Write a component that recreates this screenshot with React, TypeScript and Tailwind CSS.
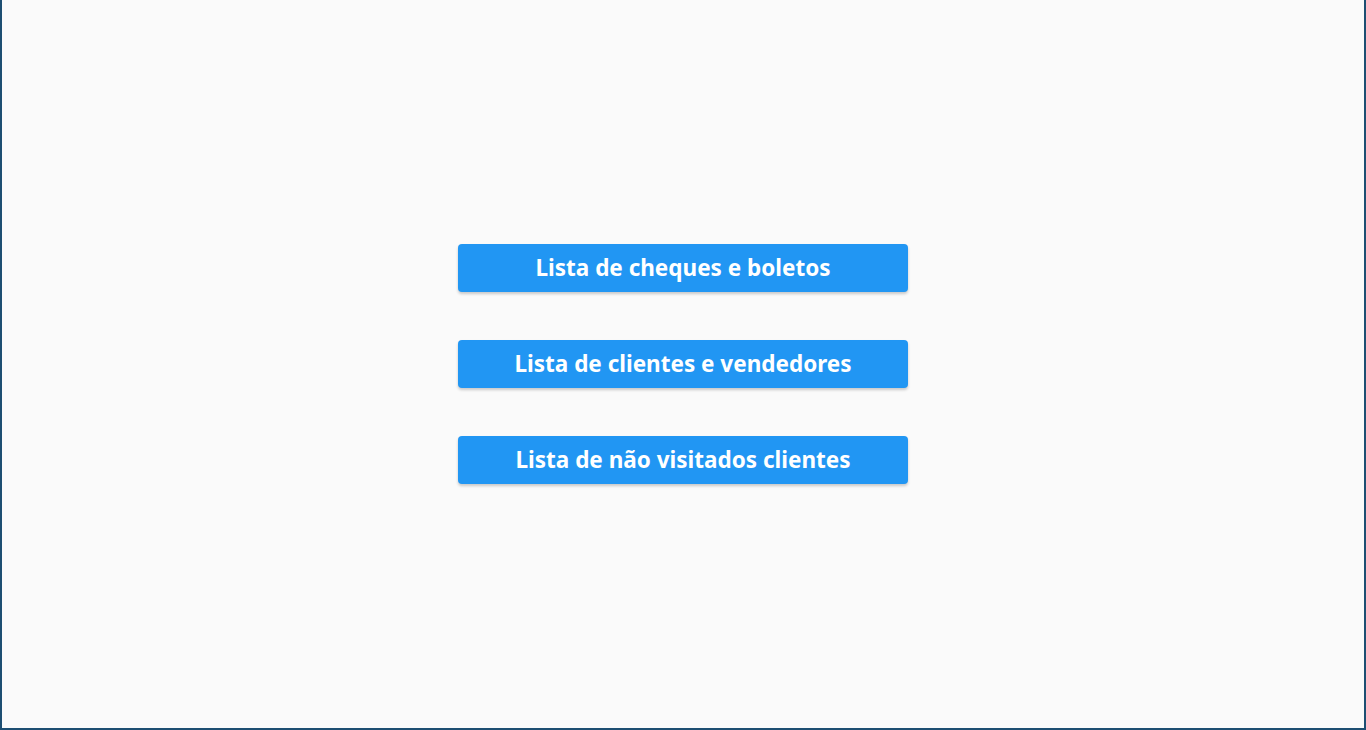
export default function App() {
  const items = [
    "Lista de cheques e boletos",
    "Lista de clientes e vendedores",
    "Lista de não visitados clientes",
  ];
  return (
    <div className="h-[730px] w-full bg-[#fafafa] border-x-2 border-b-2 border-[#1d4e72] flex flex-col items-center justify-center gap-12">
      {items.map((t) => (
        <button
          key={t}
          className="w-[450px] h-12 rounded bg-[#2196f3] text-white text-[22.5px] font-bold shadow-[0_2px_3px_rgba(0,0,0,0.2)] flex items-center justify-center"
          style={{ fontFamily: '"Noto Sans", "Open Sans", sans-serif' }}
        >
          {t}
        </button>
      ))}
    </div>
  );
}
